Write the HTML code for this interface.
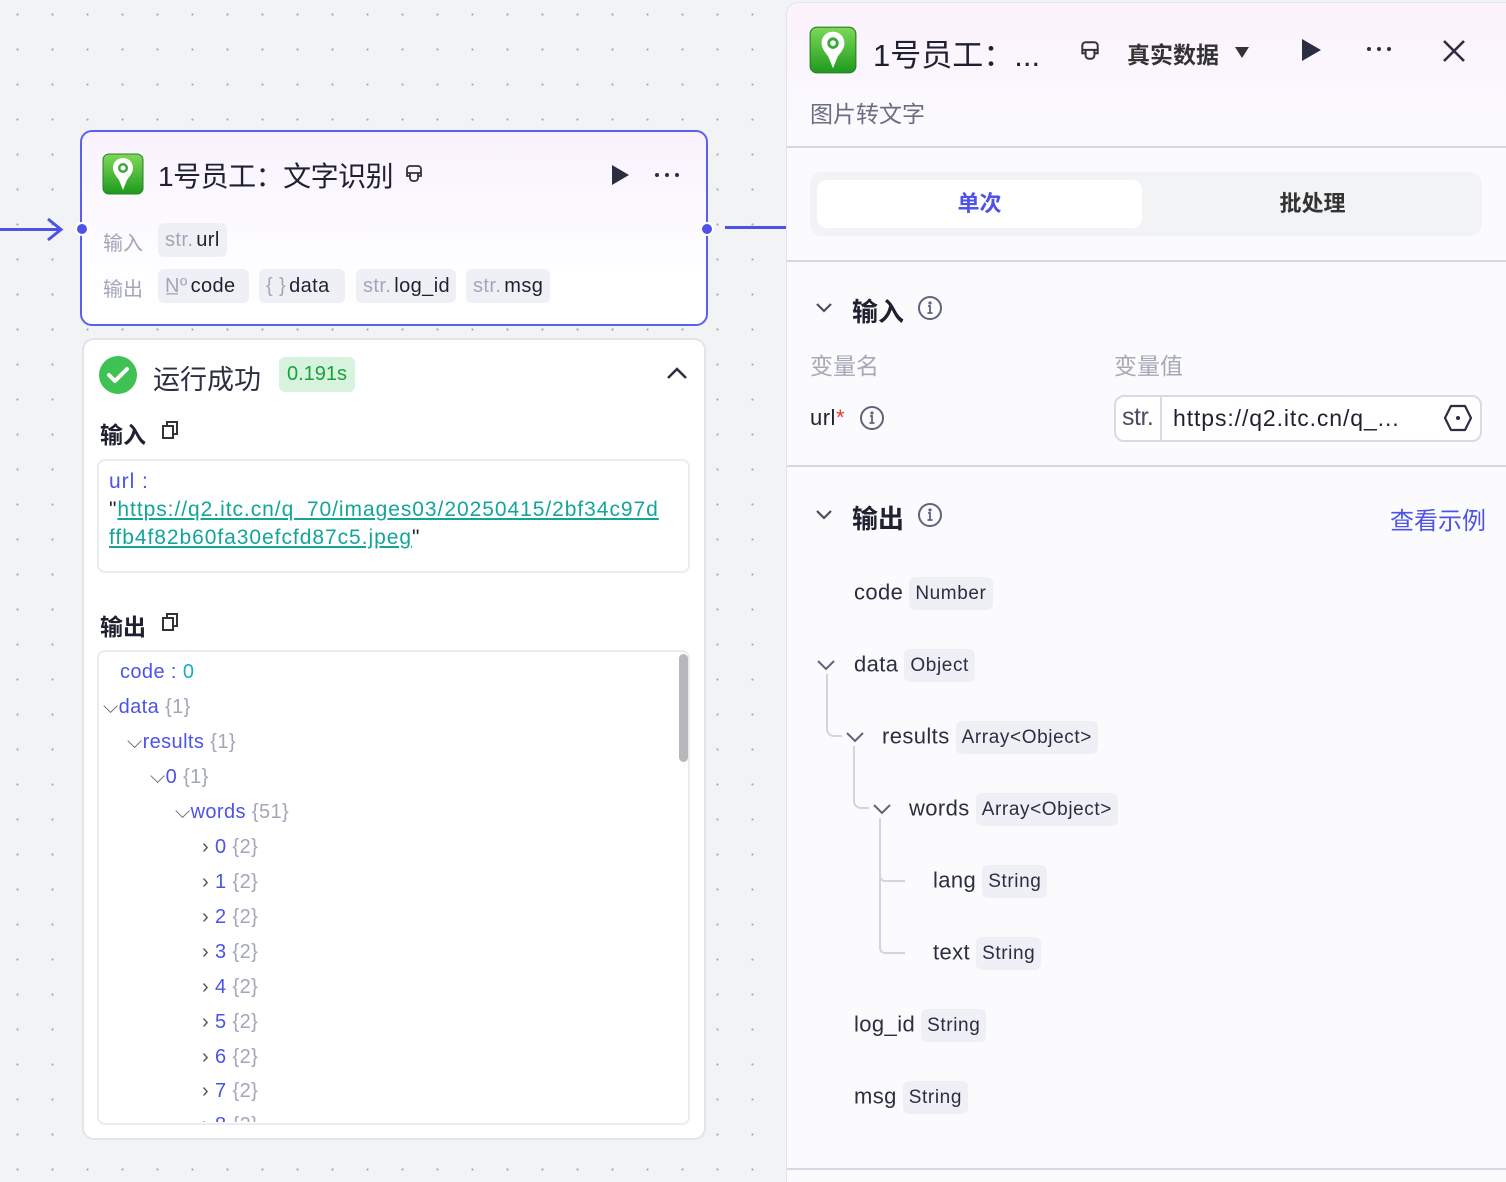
<!DOCTYPE html>
<html><head><meta charset="utf-8">
<style>
*{box-sizing:border-box;margin:0;padding:0}
body{width:1506px;height:1178px;overflow:hidden;position:relative;font-family:"Liberation Sans","Noto Sans CJK SC",sans-serif;color:#1f2130;
background-color:#f2f3f5;background-image:radial-gradient(circle,#a9abb3 1px,transparent 1.3px);background-size:35px 35px;background-position:0px -3px}
.a{position:absolute}
.tag{position:absolute;height:34px;line-height:34px;border-radius:6px;background:#eff0f6;padding:0 7px;font-size:20px;color:#1f2130;white-space:nowrap;letter-spacing:0.4px}
.tag i{font-style:normal;color:#a3a6b8;margin-right:3px}
.gray{color:#a3a6b8}
.blue{color:#4d53e8}
.row{position:absolute;font-size:20px;white-space:nowrap;letter-spacing:0.4px}
.pill{display:inline-block;background:#eff0f6;border-radius:6px;padding:0 6px;height:33px;line-height:33px;font-size:19px;color:#2b2e40;vertical-align:middle;margin-left:6px;letter-spacing:0.6px}
.tl{position:absolute;border-left:2px solid #d4d5dc;border-bottom:2px solid #d4d5dc;border-bottom-left-radius:8px}
.dots{position:absolute;display:flex;gap:6px}
.dots b{width:4px;height:4px;border-radius:50%;background:#2b2e40;display:block}
</style></head><body>

<div class="a" style="left:0;top:228px;width:60px;height:3px;background:#4d53e8"></div>
<svg class="a" style="left:44px;top:216px" width="22" height="28"><path d="M4 3 L17 13.5 L4 24" fill="none" stroke="#4d53e8" stroke-width="3"/></svg>
<div class="a" style="left:725px;top:226px;width:62px;height:3px;background:#4d53e8"></div>

<div class="a" style="left:80px;top:130px;width:628px;height:196px;border:2px solid #5b5ff0;border-radius:12px;background:linear-gradient(180deg,#f9f2fd 0%,#fdfcff 60%,#fff 100%)"></div>
<div class="a" style="left:75px;top:222px;width:14px;height:14px;border-radius:50%;background:#4d53e8;border:2px solid #fff"></div>
<div class="a" style="left:700px;top:222px;width:14px;height:14px;border-radius:50%;background:#4d53e8;border:2px solid #fff"></div>
<svg class="a" style="left:102px;top:153px" width="42" height="42" viewBox="0 0 42 42"><defs><linearGradient id="g" x1="0" y1="0" x2="0" y2="1"><stop offset="0" stop-color="#7ed957"/><stop offset="1" stop-color="#1e9a1e"/></linearGradient></defs><rect x="1" y="1" width="40" height="40" rx="6" fill="url(#g)" stroke="#2a7d2a" stroke-width="1"/><path d="M21 5c-6 0-10 4.5-10 10 0 5 4 9 6 12l4 10 4-10c2-3 6-7 6-12 0-5.5-4-10-10-10z" fill="#fff"/><circle cx="21" cy="15" r="5" fill="#3aa83a"/><circle cx="21" cy="15" r="2.5" fill="#fff"/></svg>
<div class="a" style="left:158px;top:155px;font-size:28px;color:#1f2130;letter-spacing:-0.5px">1号员工：文字识别</div>
<svg class="a" style="left:404px;top:164px" width="20" height="20" viewBox="0 0 20 20" fill="none" stroke="#333" stroke-width="1.8"><path d="M3 9V5a3 3 0 013-3h8a3 3 0 013 3v4M3 9h14M6 9v5a3 3 0 003 3h2a3 3 0 003-3V9M3 9v3h3M17 9v3h-3"/></svg>
<svg class="a" style="left:610px;top:164px" width="20" height="22"><path d="M2 1 L19 11 L2 21Z" fill="#2b2e40"/></svg>
<div class="dots" style="left:655px;top:173px"><b></b><b></b><b></b></div>
<div class="a gray" style="left:103px;top:227px;font-size:20px">输入</div>
<div class="tag" style="left:158px;top:223px"><i>str.</i>url</div>
<div class="a gray" style="left:103px;top:273px;font-size:20px">输出</div>
<div class="tag" style="left:158px;top:269px;width:91px"><i>N̲º</i>code</div>
<div class="tag" style="left:259px;top:269px;width:86px"><i>{ }</i>data</div>
<div class="tag" style="left:356px;top:269px;width:100px"><i>str.</i>log_id</div>
<div class="tag" style="left:466px;top:269px;width:84px"><i>str.</i>msg</div>

<div class="a" style="left:82px;top:338px;width:624px;height:802px;border:2px solid #e3e4ea;border-radius:12px;background:#fff"></div>
<svg class="a" style="left:98px;top:355px" width="40" height="40"><circle cx="20" cy="20" r="19" fill="#3ec254"/><path d="M11 20l6 6 12-12" fill="none" stroke="#fff" stroke-width="4" stroke-linecap="round" stroke-linejoin="round"/></svg>
<div class="a" style="left:153px;top:358px;font-size:27px;color:#2b2e40">运行成功</div>
<div class="a" style="left:279px;top:357px;width:76px;height:35px;background:#d7f2dd;border-radius:6px;color:#16a33a;font-size:20px;text-align:center;line-height:35px">0.191s</div>
<svg class="a" style="left:665px;top:364px" width="24" height="18"><path d="M3 14 L12 5 L21 14" fill="none" stroke="#2b2e40" stroke-width="2.5"/></svg>
<div class="a" style="left:100px;top:416px;font-size:23px;font-weight:bold;color:#1f2130">输入</div>
<svg class="a" style="left:161px;top:420px" width="18" height="20" fill="none" stroke="#333" stroke-width="2"><rect x="2" y="6" width="10" height="12"/><path d="M6 6V2h10v12h-4"/></svg>
<div class="a" style="left:97px;top:459px;width:593px;height:114px;border:2px solid #ebecf0;border-radius:8px"></div>
<div class="a" style="left:109px;top:468px;font-size:21px;line-height:28px;width:575px;white-space:nowrap;letter-spacing:0.95px"><span class="blue">url :</span><br>"<span style="color:#13a59a;text-decoration:underline">https://q2.itc.cn/q_70/images03/20250415/2bf34c97d<br>ffb4f82b60fa30efcfd87c5.jpeg</span>"</div>
<div class="a" style="left:100px;top:608px;font-size:23px;font-weight:bold;color:#1f2130">输出</div>
<svg class="a" style="left:161px;top:612px" width="18" height="20" fill="none" stroke="#333" stroke-width="2"><rect x="2" y="6" width="10" height="12"/><path d="M6 6V2h10v12h-4"/></svg>
<div class="a" style="left:97px;top:650px;width:593px;height:475px;border:2px solid #ebecf0;border-radius:8px;overflow:hidden">
 <div class="a" style="left:580px;top:2px;width:9px;height:108px;border-radius:5px;background:#b8b8bc"></div>
</div>
<div class="a" style="left:100px;top:652px;width:580px;height:470px;overflow:hidden;font-size:20.5px">
 <div class="row" style="left:20px;top:9px"><span class="blue">code : </span><span style="color:#13b0c8">0</span></div>
 <div class="row" style="left:3px;top:44px"><span style="color:#666">⌵</span><span class="blue">data</span> <span class="gray">{1}</span></div>
 <div class="row" style="left:27px;top:79px"><span style="color:#666">⌵</span><span class="blue">results</span> <span class="gray">{1}</span></div>
 <div class="row" style="left:50px;top:114px"><span style="color:#666">⌵</span><span class="blue">0</span> <span class="gray">{1}</span></div>
 <div class="row" style="left:75px;top:149px"><span style="color:#666">⌵</span><span class="blue">words</span> <span class="gray">{51}</span></div>
 <div class="row" style="left:102px;top:184px"><span style="color:#555">›</span> <span class="blue">0</span> <span class="gray">{2}</span></div>
 <div class="row" style="left:102px;top:219px"><span style="color:#555">›</span> <span class="blue">1</span> <span class="gray">{2}</span></div>
 <div class="row" style="left:102px;top:254px"><span style="color:#555">›</span> <span class="blue">2</span> <span class="gray">{2}</span></div>
 <div class="row" style="left:102px;top:289px"><span style="color:#555">›</span> <span class="blue">3</span> <span class="gray">{2}</span></div>
 <div class="row" style="left:102px;top:324px"><span style="color:#555">›</span> <span class="blue">4</span> <span class="gray">{2}</span></div>
 <div class="row" style="left:102px;top:359px"><span style="color:#555">›</span> <span class="blue">5</span> <span class="gray">{2}</span></div>
 <div class="row" style="left:102px;top:394px"><span style="color:#555">›</span> <span class="blue">6</span> <span class="gray">{2}</span></div>
 <div class="row" style="left:102px;top:428px"><span style="color:#555">›</span> <span class="blue">7</span> <span class="gray">{2}</span></div>
 <div class="row" style="left:102px;top:462px"><span style="color:#555">›</span> <span class="blue">8</span> <span class="gray">{2}</span></div>
</div>

<div class="a" style="left:786px;top:2px;width:722px;height:1180px;background:#fbfbfd;border-left:1px solid #e3e4ea;border-top:1px solid #e3e4ea;border-top-left-radius:12px;overflow:hidden">
 <div class="a" style="left:0;top:0;width:722px;height:145px;background:linear-gradient(180deg,#fbf2fd 0%,#fbfbfe 100%)"></div>
</div>
<svg class="a" style="left:809px;top:26px" width="48" height="48" viewBox="0 0 42 42"><rect x="1" y="1" width="40" height="40" rx="6" fill="url(#g)" stroke="#2a7d2a" stroke-width="1"/><path d="M21 5c-6 0-10 4.5-10 10 0 5 4 9 6 12l4 10 4-10c2-3 6-7 6-12 0-5.5-4-10-10-10z" fill="#fff"/><circle cx="21" cy="15" r="5" fill="#3aa83a"/><circle cx="21" cy="15" r="2.5" fill="#fff"/></svg>
<div class="a" style="left:873px;top:30px;font-size:31px;color:#1f2130">1号员工：...</div>
<svg class="a" style="left:1079px;top:40px" width="22" height="22" viewBox="0 0 20 20" fill="none" stroke="#333" stroke-width="1.8"><path d="M3 9V5a3 3 0 013-3h8a3 3 0 013 3v4M3 9h14M6 9v5a3 3 0 003 3h2a3 3 0 003-3V9M3 9v3h3M17 9v3h-3"/></svg>
<div class="a" style="left:1127px;top:36px;font-size:23px;font-weight:bold;color:#333">真实数据</div>
<svg class="a" style="left:1234px;top:46px" width="16" height="13"><path d="M1 1h14L8 12z" fill="#333"/></svg>
<svg class="a" style="left:1300px;top:38px" width="22" height="24"><path d="M2 1 L21 12 L2 23Z" fill="#2b2e40"/></svg>
<div class="dots" style="left:1367px;top:47px"><b></b><b></b><b></b></div>
<svg class="a" style="left:1441px;top:38px" width="26" height="26"><path d="M3 3L23 23M23 3L3 23" stroke="#2b2e40" stroke-width="2.6"/></svg>
<div class="a" style="left:810px;top:95px;font-size:23px;color:#6b6e80">图片转文字</div>
<div class="a" style="left:787px;top:146px;width:719px;height:2px;background:#d5d7e2"></div>

<div class="a" style="left:810px;top:172px;width:672px;height:64px;background:#f2f3f5;border-radius:12px"></div>
<div class="a" style="left:817px;top:180px;width:325px;height:48px;background:#fff;border-radius:10px;text-align:center;line-height:48px;font-size:22px;font-weight:bold;color:#4d53e8">单次</div>
<div class="a" style="left:1150px;top:180px;width:325px;height:48px;text-align:center;line-height:48px;font-size:22px;font-weight:bold;color:#333">批处理</div>
<div class="a" style="left:787px;top:260px;width:719px;height:2px;background:#d5d7e2"></div>

<svg class="a" style="left:814px;top:300px" width="20" height="16"><path d="M3 4L10 11L17 4" fill="none" stroke="#4b4e60" stroke-width="2.2"/></svg>
<div class="a" style="left:852px;top:292px;font-size:26px;font-weight:bold;color:#1f2130">输入</div>
<svg class="a" style="left:917px;top:295px" width="26" height="26"><circle cx="13" cy="13" r="11" fill="none" stroke="#60637a" stroke-width="2"/><circle cx="13" cy="8" r="1.6" fill="#60637a"/><path d="M11 11h2v7M10.5 18h5" stroke="#60637a" stroke-width="1.8" fill="none"/></svg>
<div class="a" style="left:810px;top:347px;font-size:23px;color:#a6a8b5">变量名</div>
<div class="a" style="left:1114px;top:347px;font-size:23px;color:#a6a8b5">变量值</div>
<div class="a" style="left:810px;top:405px;font-size:22px;color:#1f2130;letter-spacing:0.5px">url<span style="color:#e53935">*</span></div>
<svg class="a" style="left:859px;top:405px" width="26" height="26"><circle cx="13" cy="13" r="11" fill="none" stroke="#60637a" stroke-width="2"/><circle cx="13" cy="8" r="1.6" fill="#60637a"/><path d="M11 11h2v7M10.5 18h5" stroke="#60637a" stroke-width="1.8" fill="none"/></svg>
<div class="a" style="left:1114px;top:395px;width:368px;height:47px;border:2px solid #d8dae6;border-radius:10px;background:#fff"></div>
<div class="a" style="left:1160px;top:397px;width:2px;height:43px;background:#d8dae6"></div>
<div class="a" style="left:1122px;top:403px;font-size:25px;color:#4b4e60;letter-spacing:-0.5px">str.</div>
<div class="a" style="left:1173px;top:405px;font-size:23px;color:#1f2130;letter-spacing:0.9px">https://q2.itc.cn/q_...</div>
<svg class="a" style="left:1443px;top:403px" width="30" height="30"><path d="M8 3h14l6 12-6 12H8L2 15z" fill="none" stroke="#2b2e40" stroke-width="2.2" stroke-linejoin="round"/><circle cx="15" cy="15" r="2" fill="#2b2e40"/></svg>
<div class="a" style="left:787px;top:465px;width:719px;height:2px;background:#d5d7e2"></div>

<svg class="a" style="left:814px;top:507px" width="20" height="16"><path d="M3 4L10 11L17 4" fill="none" stroke="#4b4e60" stroke-width="2.2"/></svg>
<div class="a" style="left:852px;top:499px;font-size:26px;font-weight:bold;color:#1f2130">输出</div>
<svg class="a" style="left:917px;top:502px" width="26" height="26"><circle cx="13" cy="13" r="11" fill="none" stroke="#60637a" stroke-width="2"/><circle cx="13" cy="8" r="1.6" fill="#60637a"/><path d="M11 11h2v7M10.5 18h5" stroke="#60637a" stroke-width="1.8" fill="none"/></svg>
<div class="a" style="left:1390px;top:501px;font-size:24px;color:#4d53e8">查看示例</div>

<div class="row" style="left:854px;top:577px;font-size:22px;color:#2b2e40">code<span class="pill">Number</span></div>
<svg class="a" style="left:815px;top:657px" width="22" height="16"><path d="M3 4L11 12L19 4" fill="none" stroke="#60637a" stroke-width="2"/></svg>
<div class="row" style="left:854px;top:649px;font-size:22px;color:#2b2e40">data<span class="pill">Object</span></div>
<div class="tl" style="left:826px;top:674px;width:16px;height:63px"></div>
<svg class="a" style="left:844px;top:729px" width="22" height="16"><path d="M3 4L11 12L19 4" fill="none" stroke="#60637a" stroke-width="2"/></svg>
<div class="row" style="left:882px;top:721px;font-size:22px;color:#2b2e40">results<span class="pill">Array&lt;Object&gt;</span></div>
<div class="tl" style="left:853px;top:746px;width:16px;height:63px"></div>
<svg class="a" style="left:871px;top:801px" width="22" height="16"><path d="M3 4L11 12L19 4" fill="none" stroke="#60637a" stroke-width="2"/></svg>
<div class="row" style="left:909px;top:793px;font-size:22px;color:#2b2e40">words<span class="pill">Array&lt;Object&gt;</span></div>
<div class="tl" style="left:879px;top:818px;width:26px;height:64px;border-bottom-left-radius:6px"></div>
<div class="tl" style="left:879px;top:878px;width:26px;height:76px;border-bottom-left-radius:6px"></div>
<div class="row" style="left:933px;top:865px;font-size:22px;color:#2b2e40">lang<span class="pill">String</span></div>
<div class="row" style="left:933px;top:937px;font-size:22px;color:#2b2e40">text<span class="pill">String</span></div>
<div class="row" style="left:854px;top:1009px;font-size:22px;color:#2b2e40">log_id<span class="pill">String</span></div>
<div class="row" style="left:854px;top:1081px;font-size:22px;color:#2b2e40">msg<span class="pill">String</span></div>
<div class="a" style="left:787px;top:1168px;width:719px;height:2px;background:#d5d7e2"></div>
</body></html>
